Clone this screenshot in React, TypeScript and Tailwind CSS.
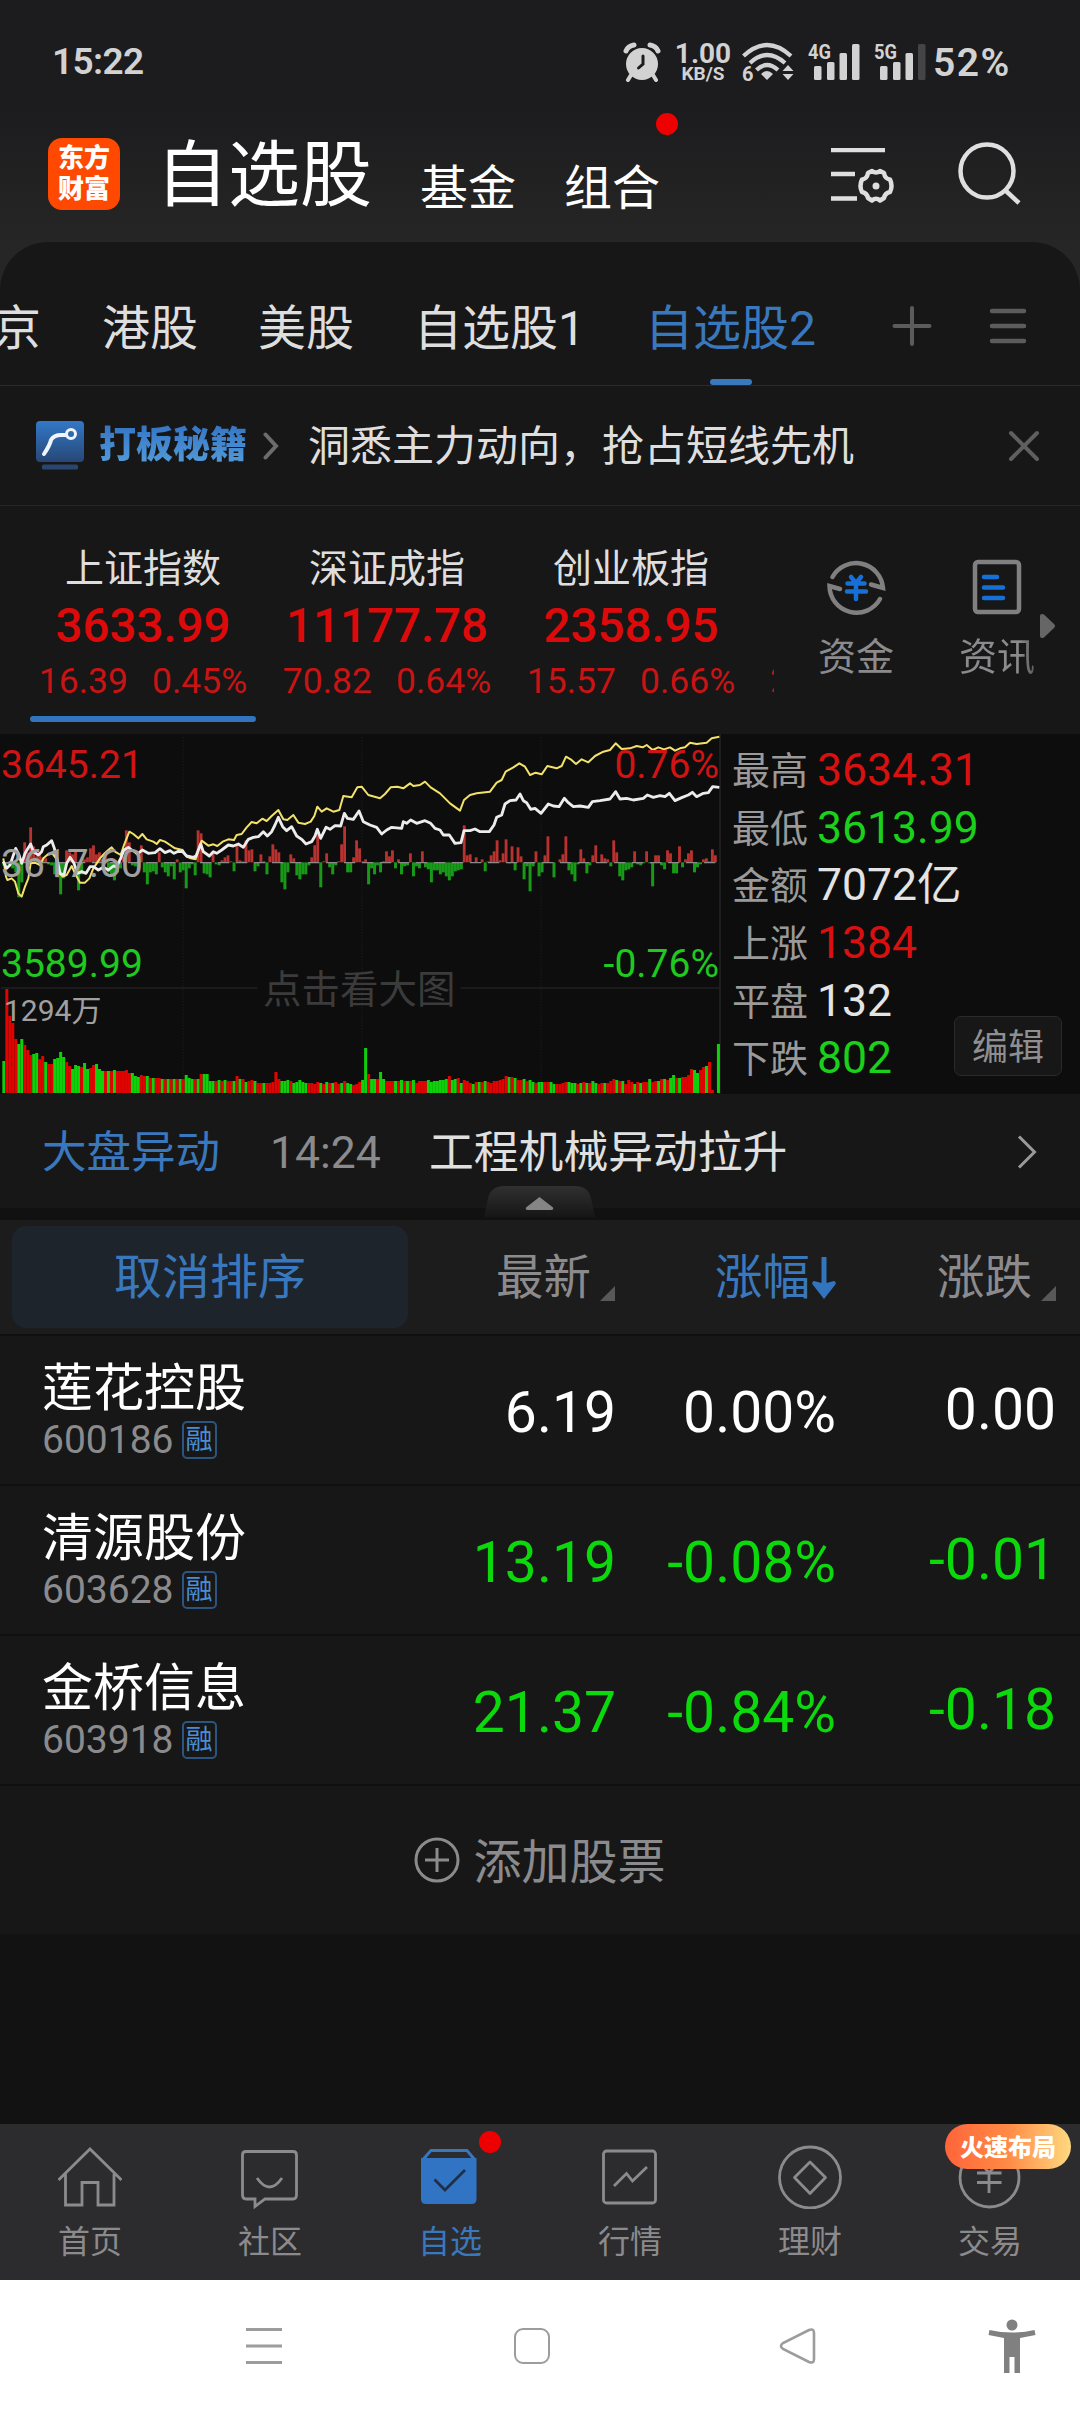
import React from 'react';

interface IndexQuote {
  name: string;
  price: string;
  change: string;
  percent: string;
  active?: boolean;
}

interface Stock {
  name: string;
  code: string;
  price: string;
  percent: string;
  change: string;
  color: string;
}

const INDEXES: IndexQuote[] = [
  { name: '上证指数', price: '3633.99', change: '16.39', percent: '0.45%', active: true },
  { name: '深证成指', price: '11177.78', change: '70.82', percent: '0.64%' },
  { name: '创业板指', price: '2358.95', change: '15.57', percent: '0.66%' }
];

const STATS = [
  { label: '最高', value: '3634.31', color: 'text-[#d81010]' },
  { label: '最低', value: '3613.99', color: 'text-[#1bd01b]' },
  { label: '金额', value: '7072亿', color: 'text-[#e4e4e4]' },
  { label: '上涨', value: '1384', color: 'text-[#d81010]' },
  { label: '平盘', value: '132', color: 'text-[#e4e4e4]' },
  { label: '下跌', value: '802', color: 'text-[#1bd01b]' }
];

const STOCKS: Stock[] = [
  { name: '莲花控股', code: '600186', price: '6.19', percent: '0.00%', change: '0.00', color: 'text-white' },
  { name: '清源股份', code: '603628', price: '13.19', percent: '-0.08%', change: '-0.01', color: 'text-[#0bd90b]' },
  { name: '金桥信息', code: '603918', price: '21.37', percent: '-0.84%', change: '-0.18', color: 'text-[#0bd90b]' }
];

// One entry per minute: positive is a red bar, negative a green one
const VOLUME = [
  -32, 104, 77, 70, 54, -49, -54, 48, 43, 38, -39, -40, 34, 37, -31, 29, 29, -34, -35, -41,
  -36, 31, 27, -24, -28, -27, 26, -30, -24, 25, 28, -29, -24, -22, 22, -22, 22, -23, 22, 22,
  22, 23, 20, -20, -17, -16, 18, 17, -17, 15, -15, 15, 15, -14, 14, -14, 14, -14, 14, -14,
  14, -18, -15, -14, 14, -14, 19, -19, -19, -12, -12, 12, -13, 12, -13, 12, 12, -12, 17, -14,
  14, -11, 12, 13, -12, 10, 10, -10, 10, 10, 11, 21, 14, -12, -12, -13, 12, -10, -11, -13,
  -11, -10, 10, 10, 9, 11, -10, 9, -11, 10, -10, 11, 9, -10, 12, -10, -9, 8, 9, 11,
  -13, -45, 19, -14, -14, 14, -21, -14, 12, 12, 12, -12, 12, -13, 12, -12, 12, -13, 10, 12,
  12, 12, -13, -11, -12, -12, -13, -13, -14, 17, -13, -14, 15, -10, 13, 12, 10, -9, 11, -11,
  11, -12, 11, 10, 12, 12, 13, 14, 17, -16, 16, -15, 13, 13, -14, 12, -13, -11, 10, -11,
  -11, 11, 11, -11, -9, 9, 9, 10, 11, -11, -10, -10, 9, -10, 11, -10, 10, -12, -10, 9,
  10, -10, 10, 12, 14, -13, 12, -12, 9, 13, 11, -9, 11, -10, 11, 11, -14, 11, 12, -12,
  14, -14, 13, -15, -18, 15, -15, 16, 16, 18, 24, -23, -20, 23, 26, -27, 31, 3, 0, -49
];

const MOMENTUM = [
  -3, -2, -4, -6, -10, -35, -20, 20, 10, 35, 16, 6, 10, 5, 4, -2, -3, -12, -15, -32,
  -16, 12, 10, 8, 12, -28, -12, 3, 5, 14, 17, 8, 10, 3, 7, -10, -12, -18, -10, -6,
  6, 32, 20, -3, -4, -7, 17, -10, -22, -10, -9, -12, 10, -5, -10, -14, -4, -17, 3, -10,
  -8, -26, -6, -2, -13, 32, 29, -11, -12, -15, 9, -2, -3, 2, 5, 7, 1, -9, 17, 2,
  1, 22, 12, 13, -9, -4, 8, 1, -12, 6, 18, 13, 10, -20, -27, -10, 8, 4, -13, -17,
  -12, -12, -3, 5, 17, 31, -25, 1, 9, -5, -12, -3, 1, 18, 36, -10, -10, 5, 22, 14,
  1, 3, -22, -6, -12, -3, -10, 1, 11, 6, 12, -6, 3, -12, -4, -3, 9, -14, -4, -6,
  11, -5, -7, -20, -8, -8, -12, -10, -14, -18, -14, -9, -8, -7, 37, 7, 8, 0, 5, 0,
  3, -9, 1, 7, 11, 22, 2, 9, 23, -1, 16, -8, 15, 6, -17, -4, -29, -4, 11, -14,
  -10, 7, 26, 0, -15, 0, 3, 8, 26, -8, -12, -19, -2, 13, 4, -11, -3, 7, 17, 0,
  8, 4, 3, -4, 22, 10, -14, -18, -8, -7, -5, 11, -2, -3, -1, 11, -1, -24, 7, 7,
  -3, -7, 12, 9, -11, -11, 16, -5, 3, 9, 12, -10, -5, -2, 3, 4, 1, 13, 7
];

const PRICE_LINE =
  '10,395 20,415 30,405 37,385 47,355 57,375 65,400 75,370 92,342 100,365 115,375 125,365 130,350 140,345 155,332 163,355 172,390 180,430 192,435 200,400 210,382 222,400 232,430 245,425 258,430 270,410 280,410 295,420 310,412 325,420 340,408 350,410 362,385 372,360 385,352 395,360 405,365 412,372 427,360 445,370 465,368 480,356 495,368 510,362 522,370 535,364 548,365 560,378 580,382 588,378 602,342 610,365 628,378 640,365 650,370 665,360 685,345 700,348 715,342 730,352 745,328 760,322 775,320 790,305 802,318 815,305 825,285 835,262 848,290 860,302 875,290 890,318 905,328 918,342 935,335 945,318 952,298 962,325 978,292 990,298 1005,287 1022,288 1033,250 1042,265 1060,268 1077,243 1090,275 1110,285 1130,292 1145,312 1160,300 1175,292 1205,295 1210,275 1220,280 1232,270 1250,280 1275,272 1292,280 1305,295 1320,300 1330,315 1348,315 1365,340 1383,338 1392,302 1410,302 1425,297 1440,305 1468,305 1482,285 1490,262 1505,255 1515,222 1530,212 1548,210 1560,192 1570,212 1580,218 1592,238 1605,235 1623,250 1645,222 1660,228 1677,230 1693,205 1705,218 1720,230 1740,228 1765,232 1777,215 1800,212 1830,207 1847,185 1860,207 1880,205 1900,210 1930,205 1942,195 1960,202 1980,197 1995,200 2008,190 2025,212 2045,203 2065,195 2077,187 2090,200 2110,190 2125,188 2138,170 2158,172';

const AVERAGE_LINE =
  '10,385 18,440 22,450 35,445 45,455 55,490 65,500 75,470 85,445 92,400 105,398 120,405 130,385 145,372 158,372 168,385 178,430 188,440 200,435 215,408 225,430 240,458 255,458 268,445 280,415 300,385 312,372 325,360 335,352 345,365 362,375 372,345 388,305 400,312 415,325 427,312 440,328 460,335 470,342 480,330 495,335 510,345 525,355 548,360 560,380 572,385 587,388 597,355 605,332 625,347 640,343 652,348 668,335 685,328 702,330 710,315 725,312 740,292 755,276 770,280 787,266 800,273 815,258 835,240 850,268 862,270 880,255 895,278 915,282 932,275 943,258 952,230 965,245 980,235 1000,245 1018,240 1030,198 1055,202 1072,172 1085,170 1105,195 1140,205 1155,192 1172,172 1192,170 1210,175 1230,160 1240,168 1260,165 1275,155 1292,172 1320,190 1350,220 1380,242 1392,210 1410,195 1430,190 1470,185 1490,158 1505,150 1517,125 1540,112 1558,100 1575,110 1590,135 1607,128 1625,133 1642,108 1670,115 1685,108 1698,80 1712,88 1728,102 1745,88 1765,97 1785,78 1810,65 1830,60 1847,40 1865,57 1890,55 1910,48 1928,52 1940,45 1958,60 1975,52 1992,58 2010,52 2025,62 2040,55 2055,52 2070,38 2090,42 2120,38 2135,25 2158,20';

const SignalBars: React.FC<{ label: string; weak?: boolean }> = ({ label, weak = false }) => (
  <svg className="overflow-visible" width="52" height="40" viewBox="0 0 52 40" fill="#d2d2d2">
    <text x="0" y="17" fontSize="21" fontWeight="700" textLength="23" lengthAdjust="spacingAndGlyphs">
      {label}
    </text>
    <rect x="6" y="24" width="7.5" height="14" rx="1.5" />
    <rect x="19" y="20" width="7.5" height="18" rx="1.5" />
    <rect x="31.5" y="11" width="7.5" height="27" rx="1.5" />
    <rect x="44" y="2" width="7.5" height="36" rx="1.5" fill={weak ? '#444446' : '#d2d2d2'} />
  </svg>
);

const StatusBar = () => (
  <div className="flex h-[122px] items-start pl-[52px] text-[#d2d2d2]">
    <span className="mt-[42px] w-[571px] text-[37px] leading-[40px] font-semibold tracking-[-0.600px]">15:22</span>
    <svg className="mt-[42px]" width="38" height="40" viewBox="0 0 38 40" fill="#d2d2d2">
      <circle cx="19" cy="22" r="16" />
      <path d="M8 33 L5 38 M30 33 L33 38" stroke="#d2d2d2" strokeWidth="4" strokeLinecap="round" />
      <path d="M3 9 Q5 4 11 3" stroke="#d2d2d2" strokeWidth="5" strokeLinecap="round" fill="none" />
      <path d="M35 9 Q33 4 27 3" stroke="#d2d2d2" strokeWidth="5" strokeLinecap="round" fill="none" />
      <path d="M20 14 V22 L15.500 26" stroke="#1c1c1e" strokeWidth="3" strokeLinecap="round" fill="none" />
    </svg>
    <div className="mt-[41px] ml-[12px] flex w-[60px] flex-col items-center">
      <span className="text-[28px] leading-[26px] font-bold">1.00</span>
      <span className="text-[19px] leading-[14px] font-bold">KB/S</span>
    </div>
    <svg
      className="mt-[42px] ml-[9px] overflow-visible"
      width="54"
      height="40"
      viewBox="0 0 54 40"
      fill="none"
      stroke="#d2d2d2"
      strokeWidth="4.200"
    >
      <path d="M1.500 14 Q25 -8 49 14" />
      <path d="M8 21 Q25 5 43 21" />
      <path d="M14.500 28 Q25 18 36 28" />
      <path d="M19 32 Q25 26 31 32 L25 38 Z" fill="#d2d2d2" stroke="none" />
      <path d="M46 23 L51.500 29 H40.500 Z M46 38 L51.500 32 H40.500 Z" fill="#d2d2d2" stroke="none" />
      <text x="0" y="38.500" fontSize="20" fontWeight="700" fill="#d2d2d2" stroke="none">6</text>
    </svg>
    <div className="mt-[42px] ml-[12px] flex gap-[14px]">
      <SignalBars label="4G" />
      <SignalBars label="5G" weak />
    </div>
    <span className="mt-[43px] ml-[7px] text-[39px] leading-[40px] font-semibold tracking-[1.500px]">52%</span>
  </div>
);

const Header = () => (
  <div className="flex h-[120px] items-start pl-12 text-white">
    <div className="mt-4 flex h-[72px] w-[72px] flex-col items-center justify-center rounded-[14px] bg-[#ff4800] text-[26px] leading-[31px] font-black">
      <span>东方</span>
      <span>财富</span>
    </div>
    <span className="mt-[16px] ml-[36px] text-[72px] leading-[76px]">自选股</span>
    <span className="mt-[39px] ml-[48px] text-[48px] leading-[56px]">基金</span>
    <div className="relative mt-[39px] ml-[48px] text-[48px] leading-[56px]">
      组合
      <span className="absolute top-[-48px] right-[-18px] h-[22px] w-[22px] rounded-full bg-[#ee0000]" />
    </div>
    <svg className="mt-[26px] ml-[171px]" width="66" height="64" viewBox="0 0 66 64" fill="none" stroke="#dfdfdf">
      <path d="M0 2 H54 M0 26 H24 M0 50.500 H26" strokeWidth="4.500" />
      <path
        d="M41 23 Q45 26 49 23 L53 25 Q54 31 59 31.500 Q62 38 59 44 Q54 45 53 50 L49 52.500 Q45 49 41 52.500 L37 50 Q36 45 31 44 Q28 38 31 31.500 Q36 31 37 25 Z"
        strokeWidth="4.500"
        strokeLinejoin="round"
      />
      <circle cx="45" cy="38" r="3.500" fill="#dfdfdf" stroke="none" />
    </svg>
    <svg className="mt-[19px] ml-[61px]" width="66" height="66" viewBox="0 0 66 66" fill="none" stroke="#dfdfdf">
      <circle cx="29" cy="30" r="26.500" strokeWidth="4.500" />
      <path d="M47 49 L61 62" strokeWidth="4.500" />
    </svg>
  </div>
);

const GroupTabs = () => (
  <div className="flex h-[144px] items-start border-b border-[#2b2b2b] pt-[57px] text-[48px] leading-[60px] text-[#dedede]">
    <div className="flex w-[41px] justify-end overflow-hidden">京</div>
    <span className="ml-[61px]">港股</span>
    <span className="ml-[60px]">美股</span>
    <span className="ml-[60px]">自选股1</span>
    <div className="ml-[60px] flex flex-col items-center text-[#3a78bd]">
      自选股2
      <span className="mt-[20px] h-[6px] w-[42px] rounded-full bg-[#3a78bd]" />
    </div>
    <svg className="mt-[7px] ml-[76px]" width="40" height="40" viewBox="0 0 40 40" stroke="#5c5c5c" strokeWidth="4" strokeLinecap="round">
      <path d="M20 2 V38 M2.500 20 H37.500" />
    </svg>
    <svg className="mt-[7px] ml-[57px]" width="38" height="40" viewBox="0 0 38 40" stroke="#5c5c5c" strokeWidth="4.500" strokeLinecap="round">
      <path d="M3 5 H35 M3 20 H35 M3 35 H35" />
    </svg>
  </div>
);

const PromoBar = () => (
  <div className="flex h-[120px] items-center border-b border-[#262626] pl-9">
    <svg width="48" height="52" viewBox="0 0 48 52">
      <defs>
        <linearGradient id="promo" x1="0" y1="0" x2="0" y2="1">
          <stop offset="0" stopColor="#3378c8" />
          <stop offset="1" stopColor="#274775" />
        </linearGradient>
      </defs>
      <rect y="1" width="48" height="41" rx="4" fill="url(#promo)" />
      <rect x="6" y="44.500" width="36" height="5" rx="1.500" fill="#28476f" />
      <path d="M8 34 Q14 25 15 20 Q18 15 25 15 H30" stroke="#f0f5fb" strokeWidth="4" fill="none" strokeLinecap="round" />
      <circle cx="35" cy="14" r="4.500" stroke="#f0f5fb" strokeWidth="3" fill="none" />
    </svg>
    <span className="ml-[15px] bg-gradient-to-b from-[#3474c4] to-[#559fdc] bg-clip-text text-[37px] leading-[44px] font-black text-transparent">
      打板秘籍
    </span>
    <svg className="ml-[16px]" width="16" height="28" viewBox="0 0 16 28" fill="none" stroke="#6c6c6c" strokeWidth="4" strokeLinecap="round">
      <path d="M2.500 2.500 L13 14 L2.500 25.500" />
    </svg>
    <span className="mt-[2px] ml-[29px] text-[42px] leading-[50px] whitespace-nowrap text-[#dedede]">洞悉主力动向，抢占短线先机</span>
    <svg className="ml-[154px]" width="32" height="32" viewBox="0 0 32 32" stroke="#5f5f5f" strokeWidth="4" strokeLinecap="round">
      <path d="M3 3 L29 29 M29 3 L3 29" />
    </svg>
  </div>
);

const IndexStrip = () => (
  <div className="flex h-[228px] text-[#dedede]">
    <div className="flex w-[774px] shrink-0 overflow-hidden pl-[21px]">
      {INDEXES.map(item => (
        <div key={item.name} className="flex w-[244px] shrink-0 flex-col items-center pt-[39px] whitespace-nowrap">
          <span className="text-[39px] leading-[48px]">{item.name}</span>
          <span className="mt-[5px] text-[47.500px] leading-[56px] font-medium text-[#dc0a0a]">{item.price}</span>
          <div className="mt-[7px] flex gap-6 text-[35.500px] leading-[40px] text-[#c81414]">
            <span>{item.change}</span>
            <span>{item.percent}</span>
          </div>
          {item.active && <span className="mt-[15px] h-[6px] w-[226px] rounded-full bg-[#3274be]" />}
        </div>
      ))}
      <span className="mt-[155px] ml-[17px] text-[35px] leading-[40px] text-[#c41616]">20.14</span>
    </div>
    <div className="flex pl-[43px] text-[38px] leading-[48px] text-[#8b8b8d]">
      <div className="flex w-[78px] flex-col items-center pt-[50px]">
        <svg width="62" height="62" viewBox="0 0 62 62" fill="none" stroke="#808080" strokeWidth="4.500">
          <path d="M7.500 21 A27 27 0 0 1 58 32 L46 28.500" strokeLinecap="round" />
          <path d="M55 43 A27 27 0 0 1 4.500 30 L15 33" strokeLinecap="round" />
          <path d="M26 21 L31 27 L36 21 M22.500 27.500 H39.500 M22 35.500 H41 M31 28 V43" stroke="#1770d8" strokeLinecap="round" />
        </svg>
        <span className="mt-[15px]">资金</span>
      </div>
      <div className="ml-[62px] flex w-[80px] flex-col items-center pt-[50px]">
        <svg width="62" height="62" viewBox="0 0 62 62" fill="none" stroke="#808080" strokeWidth="4.500">
          <rect x="9" y="6" width="44" height="50" rx="3" />
          <path d="M18 21 H31 M18 31.500 H37 M18 42 H37" stroke="#1770d8" strokeLinecap="round" />
        </svg>
        <span className="mt-[15px] bg-gradient-to-r from-[#8b8b8d] from-80% to-[#5a5a5c] bg-clip-text text-transparent">资讯</span>
      </div>
      <svg className="mt-[107px] ml-[3px]" width="16" height="26" viewBox="0 0 16 26" fill="#666666">
        <path d="M0 3 Q0 0 4 1.500 L14 11 Q16 13 14 15 L4 24.500 Q0 26 0 23 Z" />
      </svg>
    </div>
  </div>
);

const IndexChart = () => (
  <svg width="722" height="360" viewBox="0 12 2166 1080" fill="none">
    <g stroke="#262626" strokeWidth="3" strokeDasharray="3 6">
      <path d="M549 22 V1088 M1086 22 V1088 M1623 22 V1088" />
    </g>
    <path d="M3 774 H772 M1382 774 H2160 M2160 12 V1090" stroke="#212121" strokeWidth="5" />
    {MOMENTUM.map((value, i) => {
      if (value === 0) return null;
      return (
        <rect
          key={i}
          x={7 + i * 8.97}
          y={value > 0 ? 397 - value * 3 : 397}
          width={value > 0 ? 8.5 : 9}
          height={Math.abs(value) * 3}
          fill={value > 0 ? '#b83230' : '#189a18'}
        />
      );
    })}
    <path d="M6 398 H2146" stroke="#8a8a8a" strokeWidth="4" strokeDasharray="34 20" />
    {VOLUME.map((value, i) => (
      <rect
        key={i}
        x={7 + i * 8.97}
        y={1089 - Math.abs(value) * 3}
        width="9"
        height={Math.abs(value) * 3}
        fill={value > 0 ? '#e00400' : '#0fd00a'}
      />
    ))}
    <polyline points={AVERAGE_LINE} stroke="#f3e26a" strokeWidth="6" strokeLinejoin="round" />
    <polyline points={PRICE_LINE} stroke="#ececec" strokeWidth="8.500" strokeLinejoin="round" />
  </svg>
);

const ChartPanel = () => (
  <div className="flex h-[360px] bg-[#0d0d0d]">
    <div className="relative w-[722px] shrink-0 text-[39px] leading-[40px]">
      <IndexChart />
      <span className="absolute top-[11px] left-[1px] text-[#d01414]">3645.21</span>
      <span className="absolute top-[110px] left-[1px] text-[#a0a0a0]">3617.60</span>
      <span className="absolute top-[210px] left-[1px] text-[#1fc91f]">3589.99</span>
      <span className="absolute top-[11px] right-[3px] text-[#d01414]">0.76%</span>
      <span className="absolute top-[210px] right-[3px] text-[#1fc91f]">-0.76%</span>
      <span className="absolute top-[257px] left-[4px] text-[30px] text-[#a0a0a0]">1294万</span>
      <span className="absolute top-[236px] left-[263px] text-[38.500px] text-[#3b3b3b]">点击看大图</span>
    </div>
    <div className="flex w-[232px] shrink-0 flex-col pt-[8px] pl-[10px]">
      {STATS.map(stat => (
        <div key={stat.label} className="flex h-[57.600px] shrink-0 items-center whitespace-nowrap">
          <span className="w-[85px] shrink-0 pt-[2px] text-[38px] leading-[55px] text-[#9a9a9a]">{stat.label}</span>
          <span className={`text-[44.500px] leading-[57px] ${stat.color}`}>{stat.value}</span>
        </div>
      ))}
    </div>
    <button className="mb-[18px] flex h-[60px] w-[108px] shrink-0 items-center justify-center self-end rounded-[7px] border border-[#2a2a2a] bg-[#171717] pt-[3px] text-[36px] text-[#8f8f91]">
      编辑
    </button>
  </div>
);

const NewsBar = () => (
  <div className="relative">
    <div className="flex h-[114px] items-center pt-[3px] pl-[42px] text-[44.500px] leading-[56px] whitespace-nowrap">
      <span className="text-[#3a78bd]">大盘异动</span>
      <span className="ml-[50px] w-[159px] text-[#8b8b8d]">14:24</span>
      <span className="text-[44.800px] text-[#e0e0e0]">工程机械异动拉升</span>
      <svg className="mb-[2px] ml-[230px]" width="20" height="34" viewBox="0 0 20 34" fill="none" stroke="#9a9a9a" strokeWidth="3">
        <path d="M2 1.500 L17.500 17 L2 32.500" />
      </svg>
    </div>
    <div className="h-3 bg-[#111111]" />
    <svg className="absolute bottom-[3px] left-[484px]" width="111" height="31" viewBox="0 0 111 31">
      <defs>
        <linearGradient id="handle" x1="0" y1="0" x2="0" y2="1">
          <stop offset="0" stopColor="#303030" />
          <stop offset="1" stopColor="#161616" />
        </linearGradient>
      </defs>
      <path d="M0 31 L4 12 Q7 0 20 0 H91 Q104 0 107 12 L111 31 Z" fill="url(#handle)" />
      <path d="M55.500 11 L69 21.500 Q70 24 67 24 H44 Q41 24 42 21.500 Z" fill="#858585" />
    </svg>
  </div>
);

const SortMark = () => (
  <svg className="mt-[33px] ml-[9px]" width="16" height="16" viewBox="0 0 16 16">
    <path d="M15 0 V15 H0 Z" fill="#58585a" />
  </svg>
);

const ListHeader = () => (
  <div className="grid h-[114px] grid-cols-[396px_208px_220px_221px] items-center bg-[#1c1c1c] pl-3 text-[47.500px] leading-[58px] text-[#8b8b8d]">
    <button className="h-[102px] rounded-[14px] bg-[#1d242c] pt-[2px] text-[48px] text-[#3a78bd]">取消排序</button>
    <div className="flex items-center justify-end pt-px">
      最新
      <SortMark />
    </div>
    <div className="-mr-px flex items-center justify-end pt-px text-[#3a78bd]">
      涨幅
      <svg className="ml-px" width="26" height="42" viewBox="0 0 26 42" fill="#3274be">
        <path d="M10.500 0 H15.500 V26 L23 24 Q26 25 24 28 L13 42 L2 28 Q0 25 3 24 L10.500 26 Z" />
      </svg>
    </div>
    <div className="flex items-center justify-end pt-px">
      涨跌
      <SortMark />
    </div>
  </div>
);

const StockRow: React.FC<{ stock: Stock }> = ({ stock }) => (
  <div className="grid h-[150px] grid-cols-[396px_208px_220px_221px] border-t-2 border-[#101010] pl-3">
    <div className="pt-[23px] pl-[30px]">
      <div className="text-[51px] leading-[60px] text-white">{stock.name}</div>
      <div className="-mt-[1px] flex items-center text-[39px] leading-[44px] text-[#8b8b8d]">
        {stock.code}
        <span className="ml-[8px] flex h-[38px] w-[35px] items-center justify-center rounded-[5px] border-2 border-[#2c5480] text-[27px] leading-[34px] text-[#4a8fd6]">
          融
        </span>
      </div>
    </div>
    <span className={`pt-[45px] text-right text-[57px] leading-[64px] ${stock.color}`}>{stock.price}</span>
    <span className={`pt-[45px] text-right text-[57px] leading-[64px] ${stock.color}`}>{stock.percent}</span>
    <span className={`-ml-px pt-[42px] pr-px text-right text-[57px] leading-[64px] ${stock.color}`}>{stock.change}</span>
  </div>
);

const AddStock = () => (
  <div className="flex h-[150px] items-center justify-center border-t-2 border-[#101010] text-[48px] leading-[58px] text-[#8b8b8d]">
    <svg width="46" height="46" viewBox="0 0 46 46" fill="none" stroke="#8b8b8d" strokeWidth="3">
      <circle cx="23" cy="23" r="21" />
      <path d="M23 11 V35 M11 23 H35" />
    </svg>
    <span className="mt-[5px] ml-[13px]">添加股票</span>
  </div>
);

const NAV_ITEMS = [
  { label: '首页', icon: <path d="M0.500 35 L32 4 L63.500 35 M7.500 29 V60 H24 V37.500 H40 V60 H56 V29" /> },
  {
    label: '社区',
    icon: (
      <>
        <path d="M8 6.500 H55 Q58.500 6.500 58.500 10 V50 Q58.500 54 55 54 H27 L17 61.500 V54 H8 Q4.500 54 4.500 50 V10 Q4.500 6.500 8 6.500 Z" />
        <path d="M19 33 Q31.500 51 44 33" />
      </>
    )
  },
  {
    label: '自选',
    active: true,
    icon: (
      <>
        <path d="M4.500 15 L13 5.500 H49 L57 15" />
        <path d="M3 13 H58.500 V54 Q58.500 59 53.500 59 H8 Q3 59 3 54 Z" fill="#3274c4" stroke="none" />
        <path d="M16.500 34.500 L27 45 L47 25" stroke="#1f3046" />
      </>
    )
  },
  {
    label: '行情',
    icon: (
      <>
        <rect x="5.500" y="6" width="52" height="52" rx="3" />
        <path d="M16 41 L28.500 28.500 L34.500 36 L49 22" />
      </>
    )
  },
  {
    label: '理财',
    icon: (
      <>
        <circle cx="32" cy="32.500" r="30.500" />
        <path d="M32 17 L47.500 32.500 L32 48.500 L16.500 32.500 Z" strokeLinejoin="round" />
      </>
    )
  },
  {
    label: '交易',
    icon: (
      <>
        <circle cx="31.500" cy="32.500" r="29.500" />
        <path d="M22 17 L31 28 L40 17 M19 28 H43.500 M19 37.500 H43.500 M31 28 V48" />
      </>
    )
  }
];

const BottomNav = () => (
  <div className="grid h-[156px] grid-cols-6 bg-[#2c2c2e] text-[32px] leading-[40px]">
    {NAV_ITEMS.map(item => (
      <div
        key={item.label}
        className={`relative flex flex-col items-center pt-[21px] ${item.active ? 'text-[#3a78bd]' : 'text-[#8b8b8d]'}`}
      >
        <svg width="64" height="64" viewBox="0 0 64 64" fill="none" stroke="currentColor" strokeWidth="2.800">
          {item.icon}
        </svg>
        <span className="mt-[13px]">{item.label}</span>
        {item.active && <span className="absolute top-[7px] left-[119px] h-[22px] w-[22px] rounded-full bg-[#ee0000]" />}
        {item.label === '交易' && (
          <span className="absolute top-0 left-[45px] flex h-[45px] w-[126px] items-center justify-center rounded-full bg-gradient-to-r from-[#ff643a] via-[#ff8a45] to-[#ffd880] pt-[2px] text-[24px] leading-[30px] font-black text-white">
            火速布局
          </span>
        )}
      </div>
    ))}
  </div>
);

const SystemNav = () => (
  <div className="flex h-[132px] items-center bg-white pl-[246px]">
    <svg width="36" height="40" viewBox="0 0 36 40" stroke="#9c9c9c" strokeWidth="3">
      <path d="M0 3.500 H36 M0 20 H36 M0 36.500 H36" />
    </svg>
    <div className="ml-[232px] h-9 w-9 rounded-[9px] border-[2.500px] border-[#9c9c9c]" />
    <svg className="ml-[229px]" width="38" height="38" viewBox="0 0 38 38" fill="none" stroke="#9c9c9c" strokeWidth="2.600">
      <path d="M30 3 Q35 1 35 6 V32 Q35 37 30 35 L4 22 Q0 19 4 16 Z" />
    </svg>
    <svg className="ml-[171px]" width="48" height="54" viewBox="0 0 48 54" fill="#808080">
      <circle cx="24" cy="6" r="5.500" />
      <path d="M1.500 11 Q24 16 46.500 11 L47.500 16 L32 19 V54 H26.500 V38 H21.500 V54 H16 V19 L0.500 16 Z" />
    </svg>
  </div>
);

export default function App() {
  return (
    <div className="flex h-[2412px] w-[1080px] flex-col overflow-hidden bg-[#121212] font-['Roboto','Noto_Sans_CJK_SC',sans-serif]">
      <div className="bg-[linear-gradient(#1c1c1e_0px,#1c1c1e_110px,#262626_242px)]">
        <StatusBar />
        <Header />
        <div className="rounded-t-[48px] bg-[#171717]">
          <GroupTabs />
          <PromoBar />
          <IndexStrip />
        </div>
      </div>
      <ChartPanel />
      <div className="bg-[#171717]">
        <NewsBar />
        <ListHeader />
        {STOCKS.map(stock => (
          <StockRow key={stock.code} stock={stock} />
        ))}
        <AddStock />
      </div>
      <div className="flex-1" />
      <BottomNav />
      <SystemNav />
    </div>
  );
}
